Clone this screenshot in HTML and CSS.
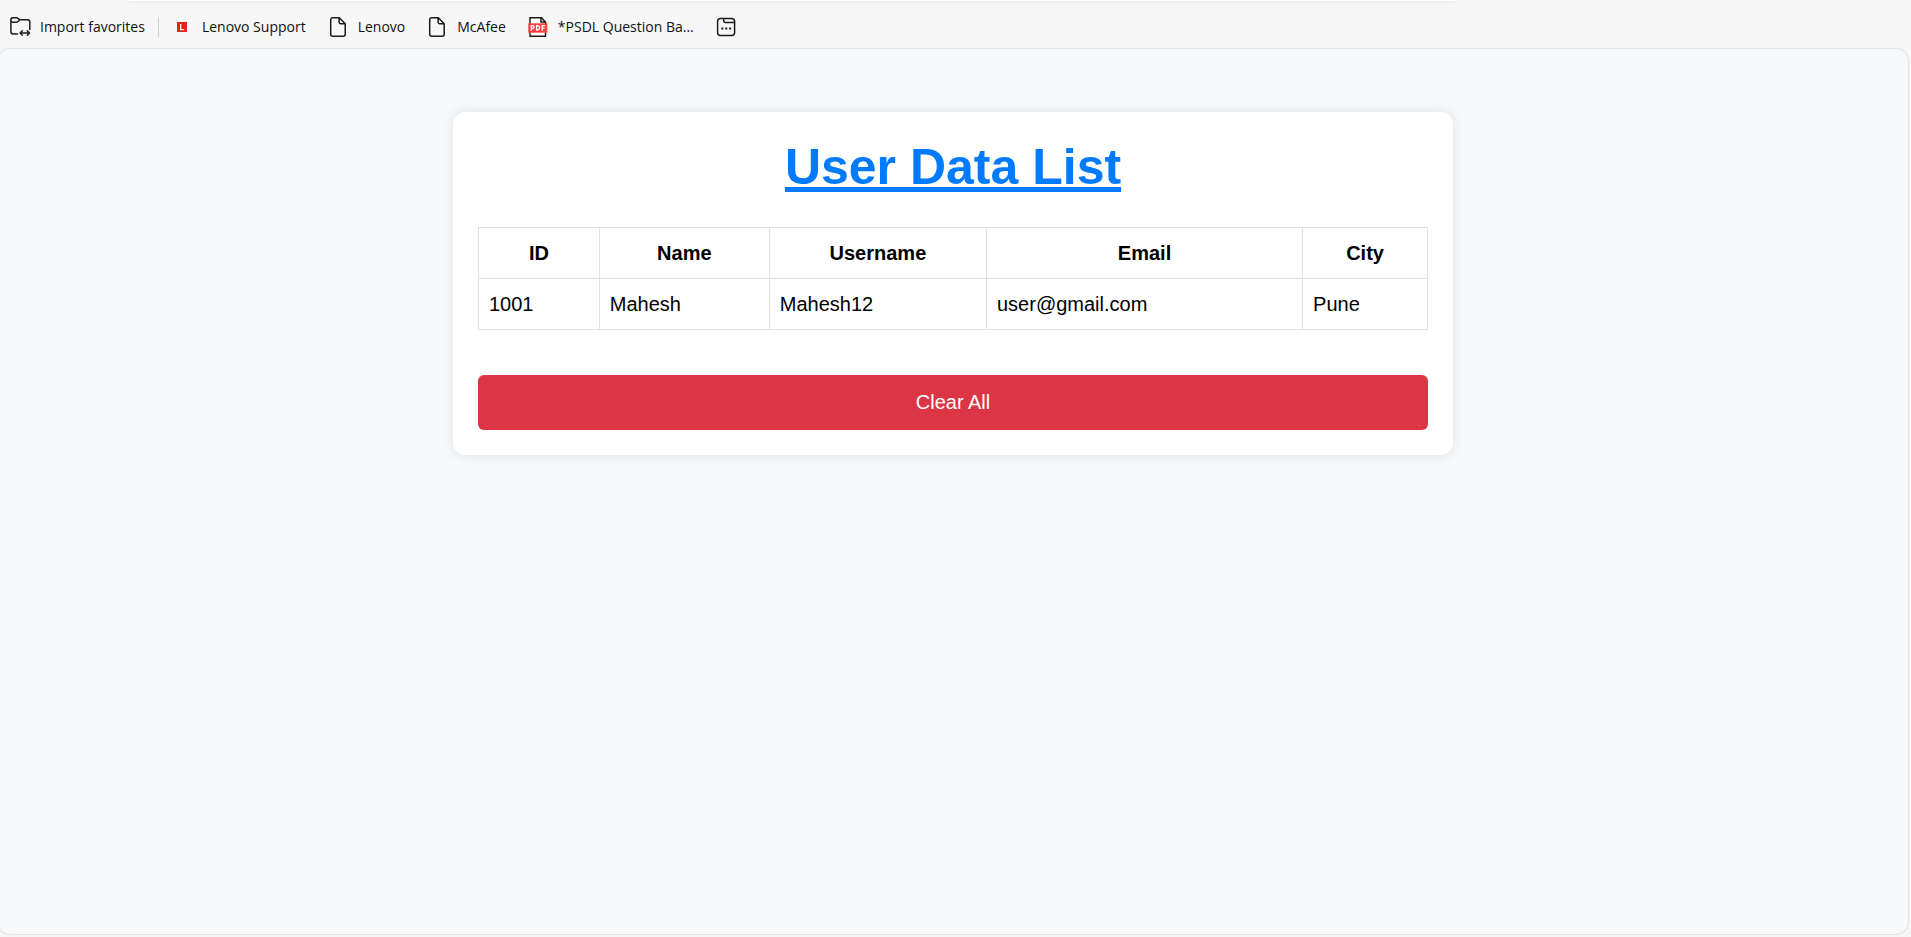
FILE: index.html
```html
<!DOCTYPE html>
<html lang="en">
<head>
<meta charset="utf-8">
<title>User Data List</title>
<link rel="stylesheet" href="styles.css">
</head>
<body>
<header class="browser-bar">
  <div class="address-edge"></div>
  <nav class="favorites" aria-label="Favorites">
    <button class="favorite" type="button">
      <svg class="icon" viewBox="0 0 20 20" fill="none" stroke="#1b1b1b" stroke-width="1.500" stroke-linejoin="round" stroke-linecap="round"><path d="M7.500 17H3.200A2.300 2.300 0 0 1 .9 14.700V3A2.200 2.200 0 0 1 3 .8h4l2.800 1.900H17.600A2.300 2.300 0 0 1 19.800 5v7.500M.9 3.500c.2 1.200 1 1.700 2 1.700h3.600c1.600 0 2-.5 3.300-2.500M10.200 16h9.200M12.300 13.800l-2.200 2.200 2.200 2.200M17.300 13.800l2.200 2.200-2.200 2.200"/></svg>
      <span>Import favorites</span>
    </button>
    <span class="separator"></span>
    <a class="favorite" href="#">
      <svg class="icon" viewBox="0 0 20 20"><path fill="#e2231a" d="M5 5h10v10H5z"/><path d="M8.700 7v5.700h3.500" fill="none" stroke="#fff" stroke-width="1.300"/></svg>
      <span>Lenovo Support</span>
    </a>
    <a class="favorite" href="#">
      <svg class="icon" viewBox="0 0 20 20" fill="none" stroke="#1b1b1b" stroke-width="1.500" stroke-linejoin="round"><path d="M4.500.8h6.800l5.900 6v10.400a2 2 0 0 1-2 2H4.700a2 2 0 0 1-2-2V2.800a2 2 0 0 1 1.800-2zM11.100.8v4.200a1.800 1.800 0 0 0 1.800 1.800h4.300"/></svg>
      <span>Lenovo</span>
    </a>
    <a class="favorite" href="#">
      <svg class="icon" viewBox="0 0 20 20" fill="none" stroke="#1b1b1b" stroke-width="1.500" stroke-linejoin="round"><path d="M4.500.8h6.800l5.900 6v10.400a2 2 0 0 1-2 2H4.700a2 2 0 0 1-2-2V2.800a2 2 0 0 1 1.800-2zM11.100.8v4.200a1.800 1.800 0 0 0 1.800 1.800h4.300"/></svg>
      <span>McAfee</span>
    </a>
    <a class="favorite" href="#">
      <svg class="icon" viewBox="0 0 20 20"><path d="M2 .8h11.500L17.500 5v14.200H2z" fill="#fff" stroke="#1b1b1b" stroke-width="1.400"/><path d="M13 .8V5h4.500" fill="none" stroke="#1b1b1b" stroke-width="1.400"/><path fill="#ff4040" d="M.3 6.300h19v9.400H.3z"/><path d="M3.300 13.700V8.700h1.300a1.200 1.200 0 0 1 0 2.800H3.300M8.600 8.700v4.300h.8a2.100 2.100 0 0 0 0-4.300zM14.200 13.700V8.700h2.800M14.200 11.200h2.300" fill="none" stroke="#fff" stroke-width="1.300"/></svg>
      <span>*PSDL Question Ba...</span>
    </a>
    <button class="favorite" type="button" aria-label="More favorites">
      <svg class="icon" viewBox="0 0 20 20" fill="none" stroke="#1b1b1b" stroke-width="1.500"><rect x="1.600" y="1.600" width="17" height="16.800" rx="3"/><path d="M7.700 1.600v1.800a2 2 0 0 0 2 2h8.900"/><path d="M5.300 10.400h2v2h-2zM9.200 10.400h2v2h-2zM13.100 10.400h2v2h-2z" fill="#1b1b1b" stroke="none"/></svg>
    </button>
  </nav>
</header>
<main class="page">
  <section class="card">
    <h1 class="title">User Data List</h1>
    <table class="users">
      <thead>
        <tr><th scope="col">ID</th><th scope="col">Name</th><th scope="col">Username</th><th scope="col">Email</th><th scope="col">City</th></tr>
      </thead>
      <tbody>
        <tr><td>1001</td><td>Mahesh</td><td>Mahesh12</td><td>user@gmail.com</td><td>Pune</td></tr>
      </tbody>
    </table>
    <button class="clear" type="button">Clear All</button>
  </section>
</main>
</body>
</html>
```
FILE: styles.css
```css
* {
  box-sizing: border-box;
}

body {
  margin: 0;
  min-height: 100vh;
  display: flex;
  flex-direction: column;
  overflow-x: hidden;
  background: #f7f7f7;
  color: #000;
  font-family: "Liberation Sans", Arial, sans-serif;
  font-size: 20px;
  line-height: 30px;
}

.address-edge {
  height: 1px;
  margin: 0 456px 0 129px;
  background: #fff;
  box-shadow: 0 1px 3px rgba(0, 0, 0, 0.12);
}

.favorites {
  display: flex;
  align-items: center;
  height: 48px;
  padding: 4px 10px 0;
  gap: 22px;
}

.favorite {
  display: flex;
  align-items: center;
  gap: 10px;
  padding: 0;
  border: 0;
  background: none;
  color: #111;
  font-family: "Open Sans", "Noto Sans", sans-serif;
  font-size: 14px;
  line-height: 20px;
  text-decoration: none;
  white-space: nowrap;
}

.icon {
  flex: none;
  width: 20px;
  height: 20px;
  overflow: visible;
}

.separator {
  width: 1px;
  height: 20px;
  margin: 0 -9px;
  background: #cfcfcf;
}

.page {
  flex: 1;
  margin: 0 3px 3px -2px;
  padding: 63px 20px;
  border-radius: 12px;
  background: #f8f9fb;
  box-shadow: 0 0 2px rgba(0, 0, 0, 0.25);
}

.card {
  max-width: 1000px;
  margin: 0 auto;
  padding: 25px;
  border-radius: 12px;
  background: #fff;
  box-shadow: 0 0 12px rgba(0, 0, 0, 0.1);
}

.title {
  margin: 0 0 30px;
  color: #007bff;
  font-size: 50px;
  line-height: 60px;
  text-align: center;
  text-decoration: underline;
  text-decoration-thickness: 5px;
  text-decoration-skip-ink: none;
}

.users {
  width: 100%;
  margin-bottom: 45px;
  border-collapse: collapse;
}

.users th,
.users td {
  padding: 10px;
  border: 1px solid #dee2e6;
}

.clear {
  display: block;
  width: 100%;
  padding: 12px 12px 13px;
  border: 0;
  border-radius: 6px;
  background: #dc3545;
  color: #fff;
  font: inherit;
}
```
